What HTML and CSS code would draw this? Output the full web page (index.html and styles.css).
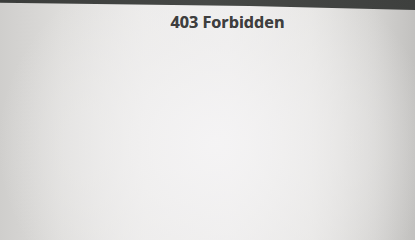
FILE: index.html
```html
<!DOCTYPE html>
<html lang="en">
<head>
<meta charset="utf-8">
<title>403 Forbidden</title>
<link rel="stylesheet" href="styles.css">
</head>
<body>
<div class="bezel"></div>
<h1 class="title">403 Forbidden</h1>
</body>
</html>
```
FILE: styles.css
```css
html, body {
  margin: 0;
  padding: 0;
  height: 100%;
}
body {
  width: 415px;
  height: 215px;
  overflow: hidden;
  font-family: "Open Sans", "Noto Sans", "Liberation Sans", sans-serif;
  background:
    radial-gradient(ellipse 70% 110% at 52% 60%, rgba(245,244,245,0.9) 0%, rgba(240,239,239,0.6) 40%, rgba(240,239,239,0) 75%),
    linear-gradient(90deg, #cfcecc 0%, #dedddb 15%, #ecebea 35%, #efeeee 55%, #e6e5e3 75%, #d4d3d1 90%, #c2c1bf 100%);
}
.bezel {
  height: 11px;
  background: linear-gradient(90deg, #3a3c3a 0%, #464846 50%, #3e403e 100%);
  clip-path: polygon(0 0, 100% 0, 100% 90%, 60% 55%, 0 25%);
}
.title {
  margin: 0;
  font-size: 16.2px;
  line-height: 22px;
  font-weight: 700;
  color: #3e3e3e;
  text-align: center;
  padding-left: 40px;
  text-shadow: 0 0 0.6px rgba(60,60,60,0.6);
}
```
